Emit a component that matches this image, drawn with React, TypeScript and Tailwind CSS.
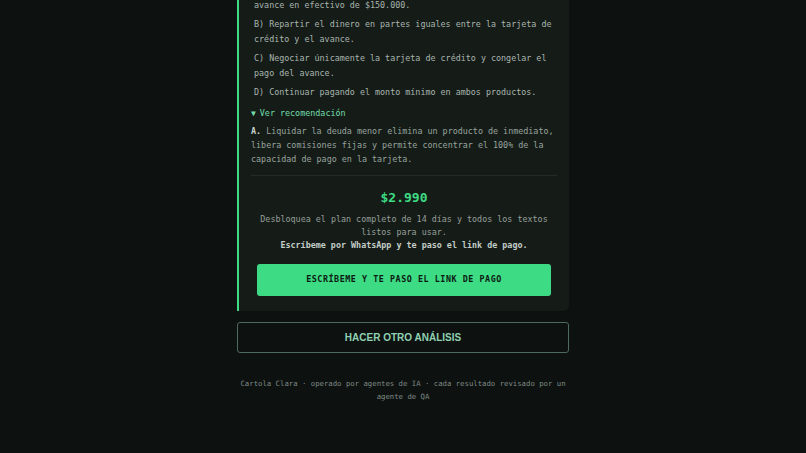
import { Fragment } from 'react'

const mono = "font-['DejaVu_Sans_Mono','Liberation_Mono',monospace]"

const opciones = [
  ['A) Usar el dinero disponible para liquidar por completo el', 'avance en efectivo de $150.000.'],
  ['B) Repartir el dinero en partes iguales entre la tarjeta de crédito y el avance.'],
  ['C) Negociar únicamente la tarjeta de crédito y congelar el pago del avance.'],
  ['D) Continuar pagando el monto mínimo en ambos productos.'],
]

export default function App() {
  return (
    <div className="min-h-screen bg-[#0d1210] overflow-hidden">
      <div className="w-[332px] mx-auto -mt-[29.5px]">
        <div className={`bg-[#151c18] border-l-2 border-[#3ddc84] rounded-r-md pt-3 pb-[15px] pl-3 pr-3 ${mono}`}>
          <div className="flex flex-col gap-1 pl-[3px]">
            {opciones.map((o, i) => (
              <p key={i} className="text-[8.4px] leading-[15px] text-[#a9b4ae]">
                {o.map((l, j) => (
                  <Fragment key={j}>
                    {j > 0 && <br />}
                    {l}
                  </Fragment>
                ))}
              </p>
            ))}
          </div>

          <p className="mt-1.5 text-[8.4px] leading-[15px] text-[#72dcaa]">
            <span className="text-[8px] mr-[4px]">▼</span>Ver recomendación
          </p>
          <p className="mt-[3.5px] text-[8.4px] leading-[14px] text-[#98a39d]">
            <span className="font-bold text-[#c9d3cd]">A.</span> Liquidar la deuda menor elimina un producto de inmediato, libera comisiones fijas y permite concentrar el 100% de la capacidad de pago en la tarjeta.
          </p>

          <div className="mt-[9px] border-t border-[#232c27] pt-[13px] px-1.5 text-center">
            <p className="text-[13px] leading-[18px] font-bold text-[#3ddc84]">$2.990</p>
            <p className="mt-[5.5px] text-[8.4px] leading-[13px] text-[#959f9a]">
              Desbloquea el plan completo de 14 días y todos los textos listos para usar.
              <br />
              <span className="font-bold text-[#c3cdc7]">Escríbeme por WhatsApp y te paso el link de pago.</span>
            </p>
            <button className="mt-3 w-full h-8 rounded-[3px] bg-[#3ddc84] text-[#0c1a12] text-[8.4px] font-bold tracking-[0.55px]">
              ESCRÍBEME Y TE PASO EL LINK DE PAGO
            </button>
          </div>
        </div>

        <button className="mt-[11px] w-full h-[31px] rounded-[3px] border border-[#4d6a5c] text-[#8fd0b2] text-[10px] font-bold font-['Liberation_Sans',Arial,sans-serif]">
          HACER OTRO ANÁLISIS
        </button>

        <p className={`mt-6 text-center text-[7.3px] leading-[13px] text-[#7f8984] ${mono}`}>
          Cartola Clara · operado por agentes de IA · cada resultado revisado por un agente de QA
        </p>
      </div>
    </div>
  )
}
